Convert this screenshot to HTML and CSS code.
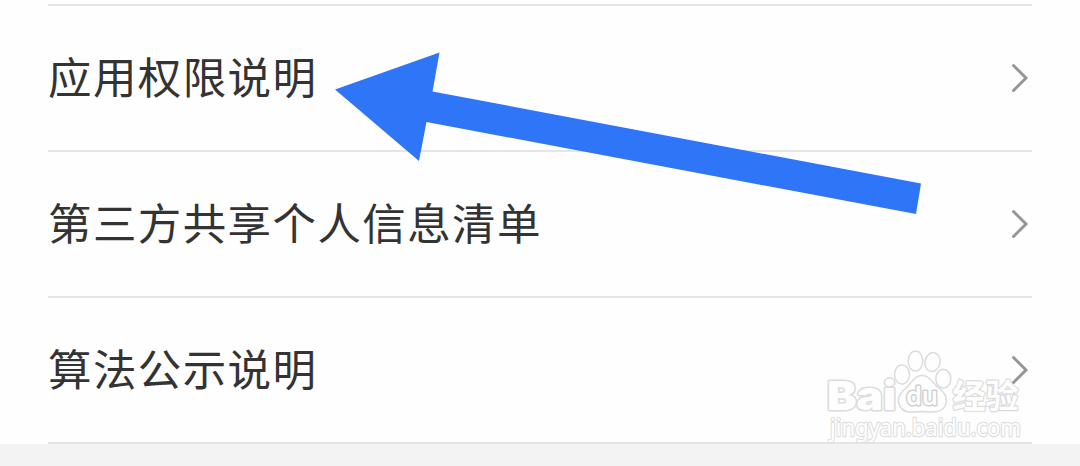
FILE: index.html
```html
<!DOCTYPE html>
<html lang="zh-CN">
<head>
    <meta charset="UTF-8">
    <title>应用权限说明</title>
    <link rel="stylesheet" href="styles.css">
</head>
<body>
    <ul class="menu">
        <li class="menu-item">
            <span class="menu-label">应用权限说明</span>
            <svg class="chevron" viewBox="0 0 18 30"><path d="M2.5 2.5 L15 15 L2.5 27.5"/></svg>
        </li>
        <li class="menu-item">
            <span class="menu-label">第三方共享个人信息清单</span>
            <svg class="chevron" viewBox="0 0 18 30"><path d="M2.5 2.5 L15 15 L2.5 27.5"/></svg>
        </li>
        <li class="menu-item">
            <span class="menu-label">算法公示说明</span>
            <svg class="chevron" viewBox="0 0 18 30"><path d="M2.5 2.5 L15 15 L2.5 27.5"/></svg>
        </li>
    </ul>

    <!-- Arrow pointing at the first entry -->
    <svg class="arrow" viewBox="0 0 586 109">
        <polygon points="0,37.5 104.5,0.5 97.5,39.5 586,131.5 581,162 91.5,70 84,109"/>
    </svg>

    <!-- Watermark -->
    <svg class="watermark" viewBox="0 0 215 100">
        <g class="paw">
            <ellipse cx="87" cy="24.5" rx="7.5" ry="9.5"/>
            <ellipse cx="100.5" cy="11" rx="7.3" ry="10"/>
            <ellipse cx="117.5" cy="12" rx="7.5" ry="9.5" transform="rotate(12 117.5 12)"/>
            <ellipse cx="128.3" cy="28.8" rx="7.5" ry="9.5"/>
            <path d="M107 25.5 C115 25.5 118 34 125 39 C131 44 133 50 130 56 C126 63.5 118 62 107 61.5 C97 62 90 64 85.5 57 C81 50 85 43 91 38 C97 33 99 25.5 107 25.5 Z"/>
        </g>
        <text class="brand" x="12" y="60" textLength="69" lengthAdjust="spacingAndGlyphs">Bai</text>
        <text class="brand-du" x="91" y="55" textLength="32" lengthAdjust="spacingAndGlyphs">du</text>
        <text class="brand-cn" x="137.5" y="58" textLength="66" lengthAdjust="spacingAndGlyphs">经验</text>
        <text class="site" x="15" y="86" textLength="191" lengthAdjust="spacingAndGlyphs">jingyan.baidu.com</text>
    </svg>
</body>
</html>
```
FILE: styles.css
```css
body {
    position: relative;
    height: 466px;
    margin: 0;
    overflow: hidden;
    background: #f3f3f3;
    font-family: "Noto Sans CJK SC", sans-serif;
}
.menu {
    box-sizing: border-box;
    height: 444px;
    margin: 0;
    padding: 4px 48px 0;
    list-style: none;
    background: #fefefe;
}
.menu-item {
    display: flex;
    align-items: center;
    justify-content: space-between;
    box-sizing: border-box;
    height: 146px;
    padding: 0 3px 0 0;
    border-bottom: 2px solid #e5e5e5;
}
.menu-item:first-child {
    height: 148px;
    border-top: 2px solid #e5e5e5;
}
.menu-label {
    padding-bottom: 5px;
    color: #333;
    font-size: 43.5px;
    line-height: 64px;
    letter-spacing: 1.4px;
}
.chevron {
    width: 18px;
    height: 30px;
    fill: none;
    stroke: #959595;
    stroke-width: 3;
    stroke-linecap: round;
}
.arrow {
    position: absolute;
    left: 335px;
    top: 52px;
    width: 586px;
    height: 109px;
    overflow: visible;
    fill: #2e75f7;
}
.watermark {
    position: absolute;
    left: 815px;
    top: 350px;
    width: 215px;
    height: 100px;
    overflow: visible;
    fill: #fefefe;
    stroke: #dcdcdc;
    stroke-width: 3;
    stroke-linejoin: round;
    paint-order: stroke;
}
.paw {
    fill: none;
    stroke-width: 1.5;
}
.brand {
    font: 900 40px Inter, sans-serif;
}
.brand-du {
    font: 600 26px "Noto Sans", sans-serif;
    stroke: #d0d0d0;
}
.brand-cn {
    font: bold 33px "Noto Sans CJK SC", sans-serif;
    stroke-width: 2.4;
}
.site {
    font: 24px "Noto Sans", sans-serif;
    stroke: #e0e0e0;
    stroke-width: 2.4;
}
```
